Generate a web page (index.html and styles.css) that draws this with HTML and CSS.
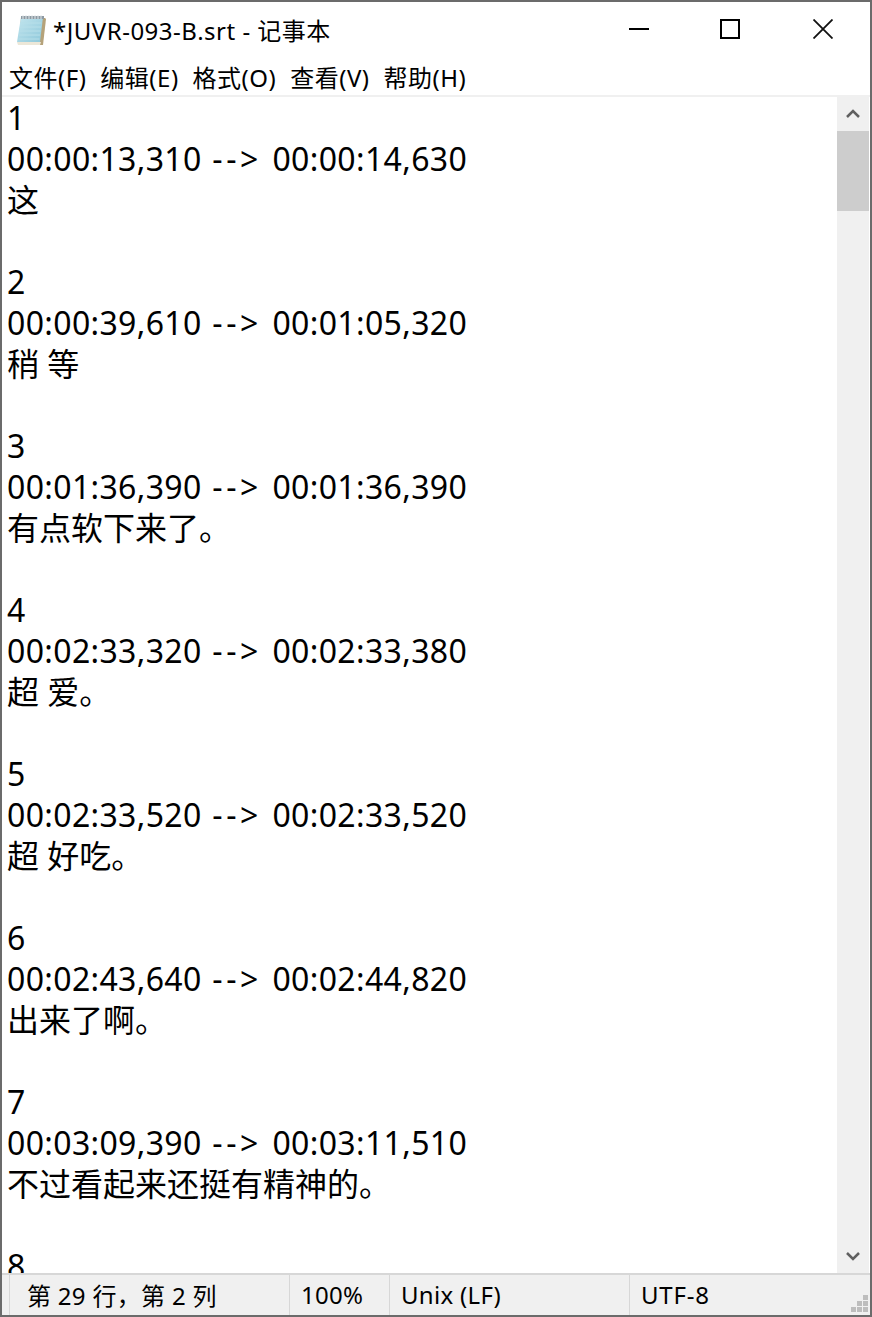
FILE: index.html
```html
<!DOCTYPE html>
<html lang="zh-CN">
  <head>
    <meta charset="UTF-8" />
    <meta name="viewport" content="width=device-width, initial-scale=1.0" />
    <title>*JUVR-093-B.srt - 记事本</title>
    <link rel="stylesheet" href="styles.css">
  </head>
  <body>
    <main class="window">
      <header class="titlebar">
        <svg class="app-icon" width="34" height="34" viewBox="0 0 34 34">
          <defs>
            <linearGradient id="page" x1="0" y1="0" x2="1" y2="1">
              <stop offset="0" stop-color="#c4e6ef" />
              <stop offset="1" stop-color="#8ec8da" />
            </linearGradient>
          </defs>
          <path d="M7 5h24l1 1-3 26H4z" fill="#b5a27a" />
          <path d="M7 4h22l-3 25H3z" fill="url(#page)" />
          <path d="M6.500 10h21M6 14h21M5.500 18h21M5 22h21M4.500 26h21" stroke="#b7dfe9" stroke-width="1" />
          <path d="M7 3h23v3H7z" fill="#8d9aa3" />
          <path d="M9 2v4M12 2v4M15 2v4M18 2v4M21 2v4M24 2v4M27 2v4" stroke="#e3e8eb" stroke-width="1" />
          <path d="M3 29h24l-1 3H4z" fill="#ece7d8" />
        </svg>
        <span class="titlebar__text">*JUVR-093-B.srt - 记事本</span>
        <div class="controls">
          <svg class="control control_min" width="20" height="20" viewBox="0 0 20 20">
            <path d="M0 10h20" stroke="#000" stroke-width="2" />
          </svg>
          <svg class="control" width="20" height="20" viewBox="0 0 20 20">
            <path d="M1 1h18v18H1z" fill="none" stroke="#000" stroke-width="2" />
          </svg>
          <svg class="control" width="20" height="20" viewBox="0 0 20 20">
            <path d="M0.500 0.500l19 19M19.500 0.500l-19 19" stroke="#111" stroke-width="1.800" />
          </svg>
        </div>
      </header>
      <nav class="menu">
        <span>文件(F)</span>
        <span>编辑(E)</span>
        <span>格式(O)</span>
        <span>查看(V)</span>
        <span>帮助(H)</span>
      </nav>
      <div class="editor">
        <div class="editor__text">
          <div class="line">1</div>
          <div class="line line_time">00:00:13,310 <span class="arrow">--&gt;</span> 00:00:14,630</div>
          <div class="line">这</div>
          <div class="line">&nbsp;</div>
          <div class="line">2</div>
          <div class="line line_time">00:00:39,610 <span class="arrow">--&gt;</span> 00:01:05,320</div>
          <div class="line">稍 等</div>
          <div class="line">&nbsp;</div>
          <div class="line">3</div>
          <div class="line line_time">00:01:36,390 <span class="arrow">--&gt;</span> 00:01:36,390</div>
          <div class="line">有点软下来了。</div>
          <div class="line">&nbsp;</div>
          <div class="line">4</div>
          <div class="line line_time">00:02:33,320 <span class="arrow">--&gt;</span> 00:02:33,380</div>
          <div class="line">超 爱。</div>
          <div class="line">&nbsp;</div>
          <div class="line">5</div>
          <div class="line line_time">00:02:33,520 <span class="arrow">--&gt;</span> 00:02:33,520</div>
          <div class="line">超 好吃。</div>
          <div class="line">&nbsp;</div>
          <div class="line">6</div>
          <div class="line line_time">00:02:43,640 <span class="arrow">--&gt;</span> 00:02:44,820</div>
          <div class="line">出来了啊。</div>
          <div class="line">&nbsp;</div>
          <div class="line">7</div>
          <div class="line line_time">00:03:09,390 <span class="arrow">--&gt;</span> 00:03:11,510</div>
          <div class="line">不过看起来还挺有精神的。</div>
          <div class="line">&nbsp;</div>
          <div class="line">8</div>
        </div>
        <div class="scrollbar">
          <div class="scrollbar__btn">
            <svg width="16" height="10" viewBox="0 0 16 10">
              <path d="M2 8l6-6 6 6" fill="none" stroke="#606060" stroke-width="2.500" />
            </svg>
          </div>
          <div class="scrollbar__thumb"></div>
          <div class="scrollbar__track"></div>
          <div class="scrollbar__btn">
            <svg width="16" height="10" viewBox="0 0 16 10">
              <path d="M2 2l6 6 6-6" fill="none" stroke="#606060" stroke-width="2.500" />
            </svg>
          </div>
        </div>
      </div>
      <footer class="status">
        <div class="status__cell status__cell_pos">第 29 行，第 2 列</div>
        <div class="status__cell status__cell_zoom">100%</div>
        <div class="status__cell status__cell_eol">Unix (LF)</div>
        <div class="status__cell status__cell_enc">UTF-8</div>
        <svg class="grip" width="17" height="17" viewBox="0 0 17 17">
          <path d="M12 0h5v5h-5zM6 6h5v5H6zM12 6h5v5h-5zM0 12h5v5H0zM6 12h5v5H6zM12 12h5v5h-5z" fill="#bdbdbd" />
        </svg>
      </footer>
    </main>
  </body>
</html>
```

FILE: styles.css
```css
* {
  box-sizing: border-box;
  margin: 0;
  padding: 0;
}
body {
  font-family: "Noto Sans", "Noto Sans CJK SC", sans-serif;
  color: #000;
  background-color: #6b6b6b;
}
.window {
  width: 872px;
  height: 1317px;
  display: flex;
  flex-direction: column;
  border: solid 2px #6b6b6b;
  background-color: #fff;
  overflow: hidden;
}
.titlebar {
  height: 54px;
  flex: none;
  display: flex;
  align-items: center;
  padding-left: 12px;
}
.app-icon {
  flex: none;
  margin-top: 2px;
}
.titlebar__text {
  margin-left: 5px;
  font-size: 24px;
  letter-spacing: 0.5px;
}
.controls {
  margin-left: auto;
  display: flex;
  gap: 73px;
  padding-right: 37px;
}
.control_min {
  margin-right: -2px;
}
.menu {
  height: 41px;
  flex: none;
  display: flex;
  align-items: center;
  gap: 14px;
  padding: 2px 0 0 7px;
  font-size: 24px;
  letter-spacing: 0.5px;
  border-bottom: solid 2px #f0f0f0;
}
.editor {
  flex: 1;
  min-height: 0;
  display: flex;
}
.editor__text {
  flex: 1;
  min-width: 0;
  overflow: hidden;
  padding-left: 5px;
  font-size: 32px;
}
.line {
  height: 41px;
  line-height: 41px;
  white-space: pre;
}
.line_time {
  letter-spacing: 0.35px;
  word-spacing: 2px;
}
.arrow {
  letter-spacing: 3.5px;
}
.scrollbar {
  width: 32px;
  flex: none;
  margin-right: 1px;
  display: flex;
  flex-direction: column;
  background-color: #f0f0f0;
}
.scrollbar__btn {
  height: 34px;
  flex: none;
  display: flex;
  align-items: center;
  justify-content: center;
}
.scrollbar__thumb {
  height: 80px;
  flex: none;
  background-color: #cdcdcd;
}
.scrollbar__track {
  flex: 1;
}
.status {
  position: relative;
  height: 42px;
  flex: none;
  display: flex;
  align-items: center;
  font-size: 24px;
  letter-spacing: 0.3px;
  background-color: #f0f0f0;
  border-top: solid 2px #d7d7d7;
  padding-left: 7px;
}
.status__cell {
  height: 100%;
  display: flex;
  align-items: center;
  padding: 0 0 2px 11px;
  border-left: solid 1px #d7d7d7;
}
.status__cell_pos {
  width: 280px;
  padding-left: 17px;
}
.status__cell_zoom {
  width: 100px;
}
.status__cell_eol {
  width: 240px;
}
.status__cell_enc {
  flex: 1;
  letter-spacing: 0.8px;
}
.grip {
  position: absolute;
  right: 2px;
  bottom: 3px;
}
```
